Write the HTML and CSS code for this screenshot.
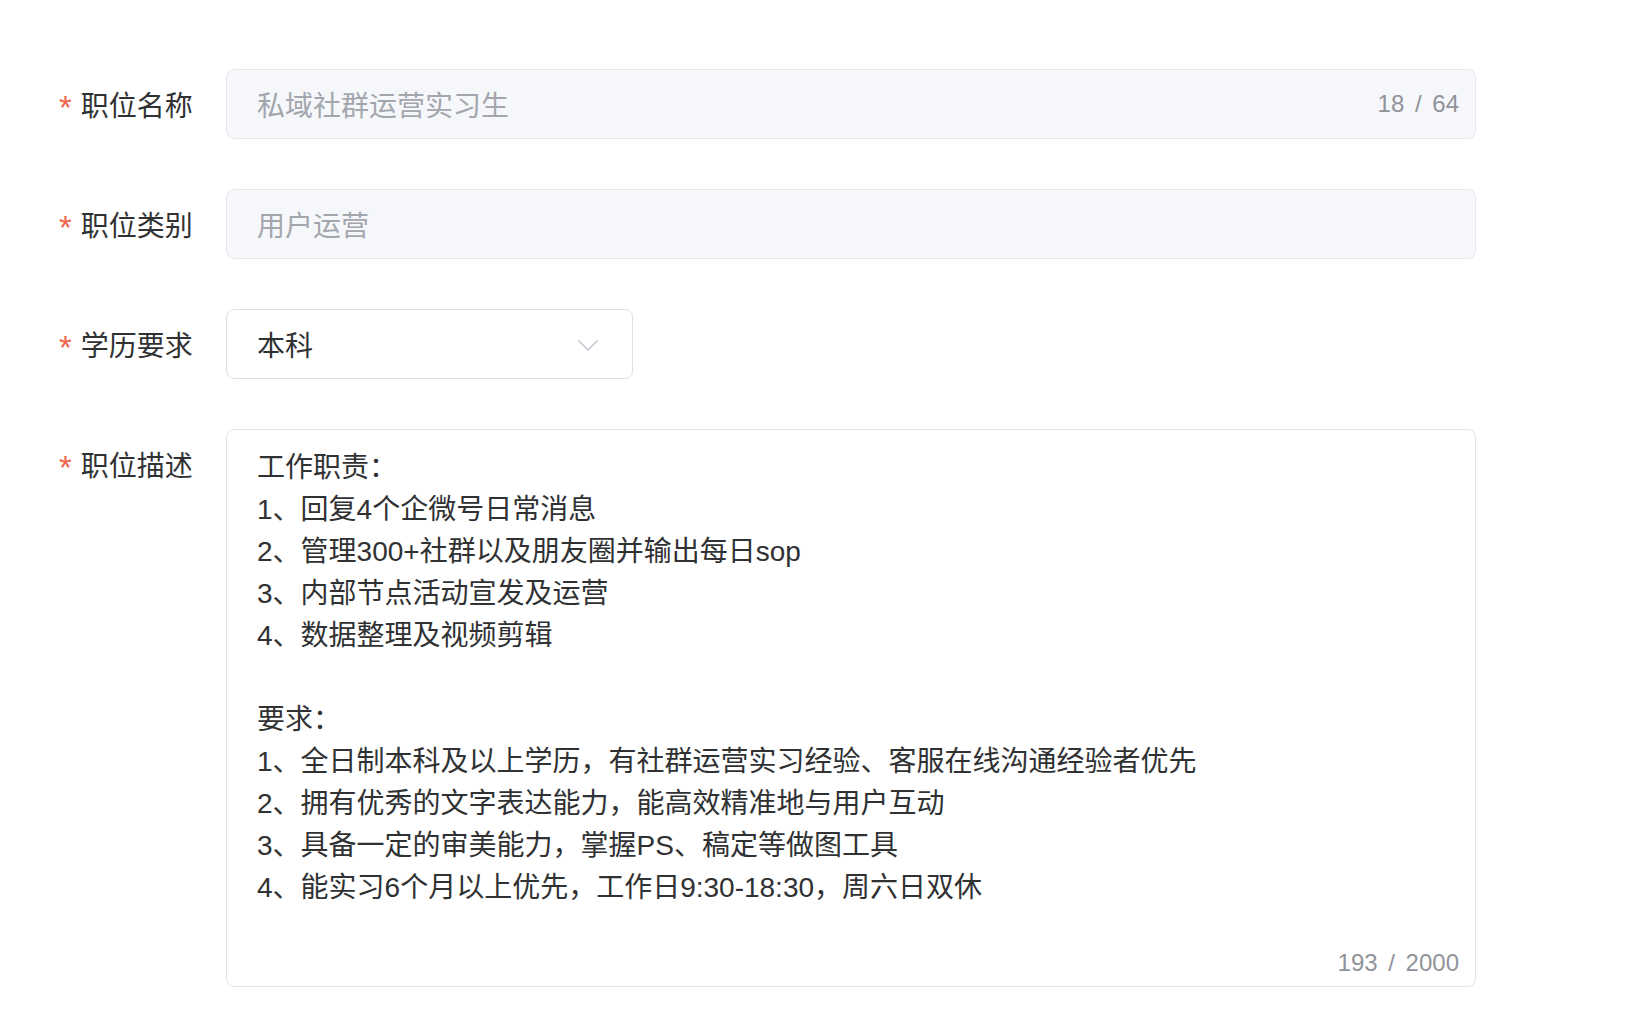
FILE: index.html
```html
<!DOCTYPE html>
<html lang="zh-CN">
<head>
<meta charset="utf-8">
<title>职位信息</title>
<link rel="stylesheet" href="styles.css">
</head>
<body>
<form class="form">
  <div class="form-item">
    <label class="label"><span class="req">*</span>职位名称</label>
    <div class="control input disabled">
      <span class="value">私域社群运营实习生</span>
      <span class="count">18 / 64</span>
    </div>
  </div>
  <div class="form-item">
    <label class="label"><span class="req">*</span>职位类别</label>
    <div class="control input disabled">
      <span class="value">用户运营</span>
    </div>
  </div>
  <div class="form-item">
    <label class="label"><span class="req">*</span>学历要求</label>
    <div class="control select">
      <span class="value">本科</span>
      <svg class="arrow" width="22" height="13" viewBox="0 0 22 13"><polyline points="1.5,1.5 11,11 20.5,1.5" fill="none" stroke="#c0c4cc" stroke-width="1.4"/></svg>
    </div>
  </div>
  <div class="form-item">
    <label class="label"><span class="req">*</span>职位描述</label>
    <div class="control textarea">
      <div class="text">工作职责：
1、回复4个企微号日常消息
2、管理300+社群以及朋友圈并输出每日sop
3、内部节点活动宣发及运营
4、数据整理及视频剪辑

要求：
1、全日制本科及以上学历，有社群运营实习经验、客服在线沟通经验者优先
2、拥有优秀的文字表达能力，能高效精准地与用户互动
3、具备一定的审美能力，掌握PS、稿定等做图工具
4、能实习6个月以上优先，工作日9:30-18:30，周六日双休</div>
      <span class="count count-area">193 / 2000</span>
    </div>
  </div>
</form>
</body>
</html>
```

FILE: styles.css
```css
html, body {
  margin: 0;
  padding: 0;
  background: #ffffff;
}

body {
  font-family: "Liberation Sans", "Noto Sans CJK SC", sans-serif;
  color: #303133;
}

.form {
  padding: 69px 0 0 59px;
}

.form-item {
  display: flex;
  align-items: flex-start;
  margin-bottom: 50px;
}

.label {
  box-sizing: border-box;
  width: 167px;
  height: 70px;
  flex: none;
  font-size: 28px;
  line-height: 64px;
  padding-top: 6px;
  color: #303133;
  white-space: nowrap;
}

.req {
  color: #f0674f;
  font-size: 33px;
  line-height: 1;
  margin-right: 9px;
  vertical-align: -3px;
}

.control {
  box-sizing: border-box;
  border: 1px solid #dcdfe6;
  border-radius: 8px;
  background: #ffffff;
  font-size: 28px;
  position: relative;
}

.input {
  width: 1250px;
  height: 70px;
  display: flex;
  align-items: center;
  justify-content: space-between;
  padding: 0 16px 0 30px;
}

.disabled {
  background: #f5f7fa;
  border-color: #e4e7ed;
}

.disabled .value {
  color: #a3a6ad;
}

.count {
  font-size: 24px;
  color: #909399;
  word-spacing: 4px;
}

.select {
  width: 407px;
  height: 70px;
  display: flex;
  align-items: center;
  justify-content: space-between;
  padding: 0 33px 0 30px;
  color: #303133;
}

.arrow {
  display: block;
  margin-top: 3px;
}

.textarea {
  width: 1250px;
  height: 558px;
  padding: 17px 30px 9px;
  border-color: #e1e3e8;
}

.text {
  white-space: pre-line;
  line-height: 42px;
  color: #303133;
}

.count-area {
  position: absolute;
  right: 16px;
  bottom: 9px;
  line-height: 28px;
}
```
